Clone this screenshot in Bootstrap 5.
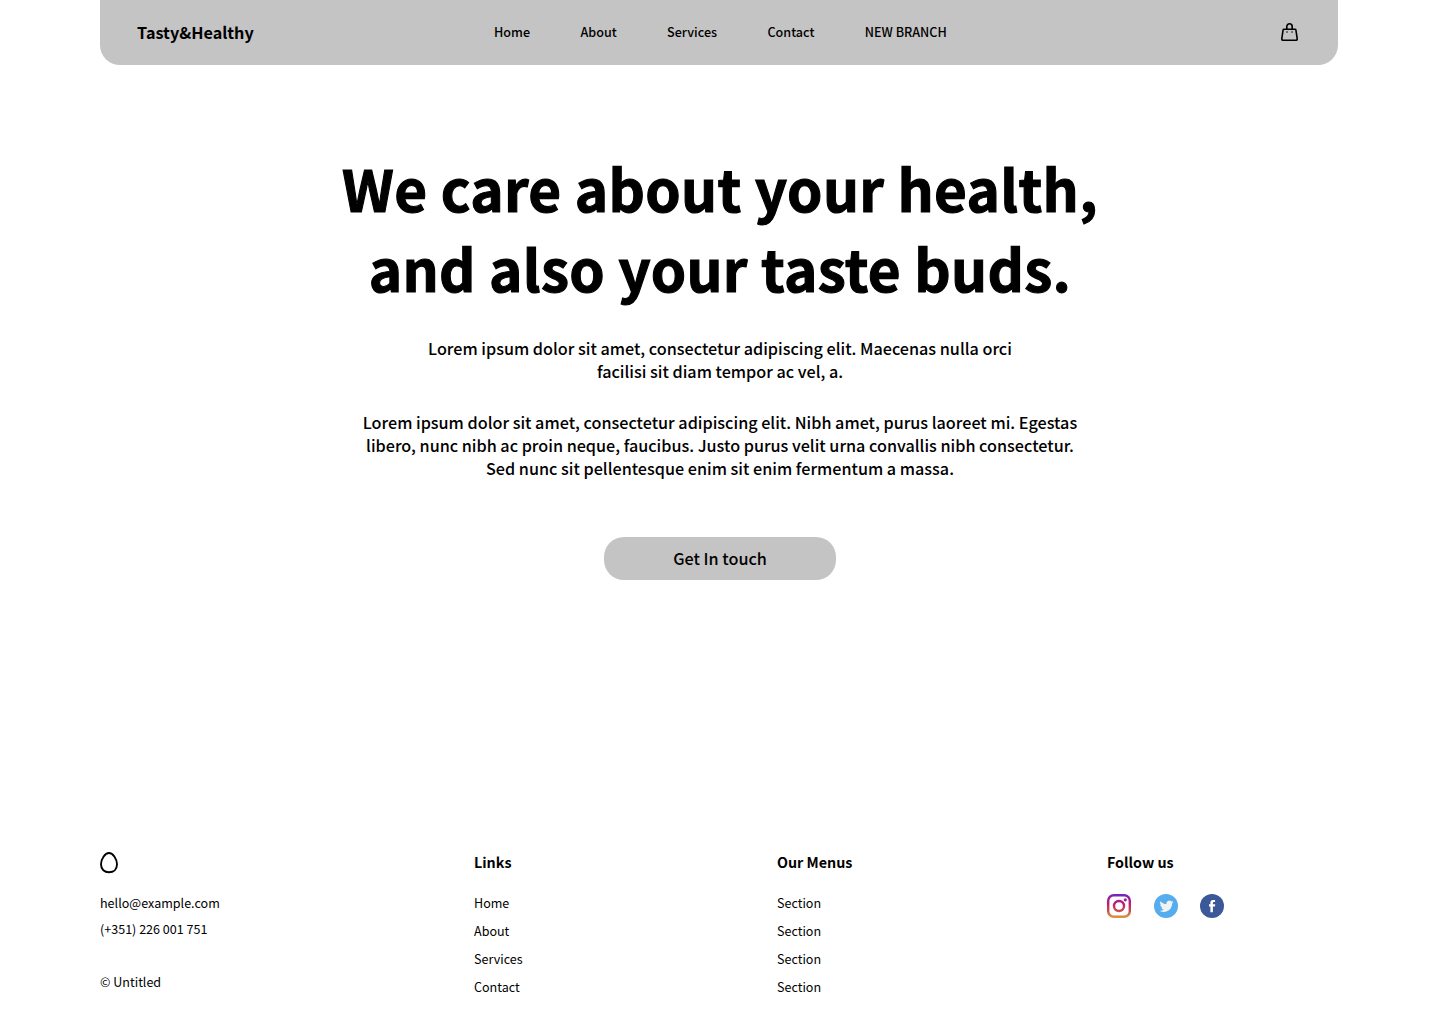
<!DOCTYPE html>
<html lang="en">
<head>
<meta charset="utf-8">
<meta name="viewport" content="width=device-width, initial-scale=1">
<title>Tasty&amp;Healthy</title>
<link href="https://cdn.jsdelivr.net/npm/bootstrap@5.3.0/dist/css/bootstrap.min.css" rel="stylesheet">
<style>
body{font-family:"Noto Sans CJK JP","Noto Sans",sans-serif;color:#000;background:#fff;height:1024px;overflow:hidden}
.page{width:1240px;margin-left:100px;height:1024px}
.topbar{width:1238px;height:65px;background:#c4c4c4;border-radius:0 0 20px 20px;padding:0 40px 0 37px}
.brand{font-size:16.2px;font-weight:700;line-height:24px;color:#000;width:357px;margin-top:-2px}
.topbar .menu-list .nav-link{font-size:12.58px;font-weight:500;line-height:20px;color:#000;padding:0}
.menu-list{gap:50.4px;margin-top:-2px}
.hero{padding-top:82px}
.hero h1{font-size:56.6px;font-weight:700;line-height:80px;letter-spacing:.34px;margin:0;-webkit-text-stroke:1.1px #000}
.hero p{font-size:16.18px;font-weight:500;line-height:23px}
.hero .intro{margin:30px 0 28px}
.hero .detail{margin:0 0 57px}
.btn-touch{width:232px;height:43px;border-radius:20px;background:#c4c4c4;color:#000;font-size:16.2px;font-weight:500;line-height:23px;border:0;padding:0}
.btn-touch:hover{background:#b5b5b5}
.foot{font-size:12.55px;line-height:28px;padding-bottom:23px}
.foot a{color:#000;text-decoration:none}
.foot h2{font-size:14.3px;font-weight:700;line-height:22px;margin:0 0 16px}
.c1{width:374px}.c2{width:303px}.c3{width:330px}
.c1 .line{line-height:26px}
.c1 .copy{line-height:26px;margin-top:27px}
.egg{margin-top:1px}
.social{gap:22.5px;margin-top:21px}
svg{display:block}
</style>
</head>
<body>
<div class="page d-flex flex-column">
<header class="topbar navbar navbar-expand flex-shrink-0 flex-nowrap">
<a class="brand text-decoration-none" href="#">Tasty&amp;Healthy</a>
<ul class="navbar-nav menu-list">
<li class="nav-item"><a class="nav-link" href="#">Home</a></li>
<li class="nav-item"><a class="nav-link" href="#">About</a></li>
<li class="nav-item"><a class="nav-link" href="#">Services</a></li>
<li class="nav-item"><a class="nav-link" href="#">Contact</a></li>
<li class="nav-item"><a class="nav-link text-nowrap" href="#">NEW BRANCH</a></li>
</ul>
<a class="ms-auto" href="#" aria-label="Bag"><svg width="17" height="19" viewBox="0 0 17 19" fill="none" stroke="#000" stroke-width="1.600"><path d="M3 6.300H14Q14.800 6.300 14.900 7L16.200 15.700Q16.300 17.300 14.800 17.300H2.200Q.7 17.300 .8 15.700L2.100 7Q2.200 6.300 3 6.300Z"/><path d="M5.800 6V3.500A2.700 2.700 0 0 1 11.200 3.500V6"/><path d="M5 9H7M10 9H12" stroke="#555" stroke-width="1.600"/></svg></a>
</header>
<main class="hero text-center flex-grow-1">
<h1>We care about your health,<br>and also your taste buds.</h1>
<p class="intro">Lorem ipsum dolor sit amet, consectetur adipiscing elit. Maecenas nulla orci<br>facilisi sit diam tempor ac vel, a.</p>
<p class="detail">Lorem ipsum dolor sit amet, consectetur adipiscing elit. Nibh amet, purus laoreet mi. Egestas<br>libero, nunc nibh ac proin neque, faucibus. Justo purus velit urna convallis nibh consectetur.<br>Sed nunc sit pellentesque enim sit enim fermentum a massa.</p>
<button class="btn btn-touch" type="button">Get In touch</button>
</main>
<footer class="foot d-flex flex-shrink-0">
<div class="c1">
<svg class="egg" width="18" height="22" viewBox="0 0 18 22" fill="none" stroke="#000" stroke-width="1.900"><path d="M9 1C13 1 17 7.200 17 12.200C17 17.500 13.500 20.200 9 20.200S1 17.500 1 12.200C1 7.200 5 1 9 1Z"/></svg>
<div class="line mt-3"><a href="#">hello@example.com</a></div>
<div class="line">(+351) 226 001 751</div>
<div class="copy">© Untitled</div>
</div>
<div class="c2"><h2>Links</h2>
<ul class="list-unstyled m-0"><li><a href="#">Home</a></li><li><a href="#">About</a></li><li><a href="#">Services</a></li><li><a href="#">Contact</a></li></ul></div>
<div class="c3"><h2>Our Menus</h2>
<ul class="list-unstyled m-0"><li><a href="#">Section</a></li><li><a href="#">Section</a></li><li><a href="#">Section</a></li><li><a href="#">Section</a></li></ul></div>
<div class="c4"><h2>Follow us</h2>
<div class="social d-flex">
<a href="#" aria-label="Instagram"><svg width="24" height="24" viewBox="0 0 24 24"><defs><linearGradient id="ig" x1="0" y1="24" x2="0" y2="0" gradientUnits="userSpaceOnUse"><stop offset="0" stop-color="#e09b3d"/><stop offset=".3" stop-color="#c74c4d"/><stop offset=".6" stop-color="#c21975"/><stop offset="1" stop-color="#7024c4"/></linearGradient></defs><g fill="none" stroke="url(#ig)" stroke-width="2.400"><rect x="1.200" y="1.200" width="21.600" height="21.600" rx="5.600"/><circle cx="12" cy="12" r="5"/></g><circle cx="18.300" cy="5.800" r="1.600" fill="url(#ig)"/></svg></a>
<a href="#" aria-label="Twitter"><svg width="24" height="24" viewBox="0 0 24 24"><circle cx="12" cy="12" r="12" fill="#55acee"/><path fill="#f1f2f2" transform="translate(5.600 5.300) scale(.58)" d="M23.950 4.570a10 10 0 0 1-2.820.77 4.960 4.960 0 0 0 2.160-2.720c-.95.550-2 .95-3.130 1.180a4.920 4.920 0 0 0-8.380 4.480C7.690 8.100 4.070 6.130 1.640 3.160a4.920 4.920 0 0 0 1.520 6.570 4.900 4.900 0 0 1-2.230-.61v.06a4.920 4.920 0 0 0 3.950 4.830 5 5 0 0 1-2.210.08 4.940 4.940 0 0 0 4.600 3.420A9.870 9.870 0 0 1 0 19.540a14 14 0 0 0 7.550 2.210c9.050 0 14-7.500 14-13.980 0-.21 0-.42-.02-.63a9.940 9.940 0 0 0 2.420-2.570Z"/></svg></a>
<a href="#" aria-label="Facebook"><svg width="24" height="24" viewBox="0 0 24 24"><circle cx="12" cy="12" r="12" fill="#3b5998"/><path fill="#fff" d="M15 12.470H12.880V18.200H10.400V12.470H9V10.300H10.400V8.900C10.400 7.300 11.100 6 13.200 6H15.050V8.100H13.700C13.100 8.100 12.880 8.400 12.880 8.900V10.300H15.200Z"/></svg></a>
</div></div>
</footer>
</div>
<script src="https://cdn.jsdelivr.net/npm/bootstrap@5.3.0/dist/js/bootstrap.bundle.min.js"></script>
</body>
</html>
